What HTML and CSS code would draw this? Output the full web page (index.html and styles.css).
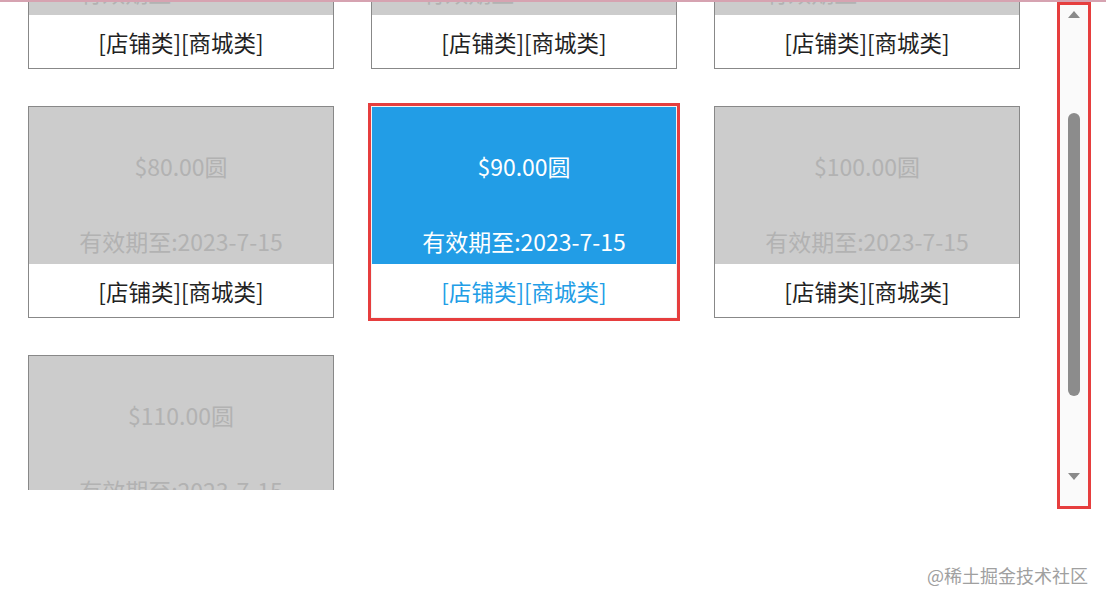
FILE: index.html
```html
<!DOCTYPE html>
<html lang="zh-CN">
<head>
    <meta charset="UTF-8">
    <meta name="viewport" content="width=device-width, initial-scale=1.0">
    <title>优惠券列表</title>
    <link rel="stylesheet" href="styles.css">
</head>
<body>
<div class="top-line"></div>

<div class="page">
    <!-- 优惠券列表 -->
    <div class="list">
        <div class="grid">
            <div class="coupon">
                <div class="coupon-main">
                    <div class="price">$50.00圆</div>
                    <div class="date">有效期至:2023-7-15</div>
                </div>
                <div class="coupon-type">[店铺类][商城类]</div>
            </div>
            <div class="coupon">
                <div class="coupon-main">
                    <div class="price">$60.00圆</div>
                    <div class="date">有效期至:2023-7-15</div>
                </div>
                <div class="coupon-type">[店铺类][商城类]</div>
            </div>
            <div class="coupon">
                <div class="coupon-main">
                    <div class="price">$70.00圆</div>
                    <div class="date">有效期至:2023-7-15</div>
                </div>
                <div class="coupon-type">[店铺类][商城类]</div>
            </div>
            <div class="coupon">
                <div class="coupon-main">
                    <div class="price">$80.00圆</div>
                    <div class="date">有效期至:2023-7-15</div>
                </div>
                <div class="coupon-type">[店铺类][商城类]</div>
            </div>
            <div class="coupon active">
                <div class="coupon-main">
                    <div class="price">$90.00圆</div>
                    <div class="date">有效期至:2023-7-15</div>
                </div>
                <div class="coupon-type">[店铺类][商城类]</div>
            </div>
            <div class="coupon">
                <div class="coupon-main">
                    <div class="price">$100.00圆</div>
                    <div class="date">有效期至:2023-7-15</div>
                </div>
                <div class="coupon-type">[店铺类][商城类]</div>
            </div>
            <div class="coupon">
                <div class="coupon-main">
                    <div class="price">$110.00圆</div>
                    <div class="date">有效期至:2023-7-15</div>
                </div>
                <div class="coupon-type">[店铺类][商城类]</div>
            </div>
        </div>
    </div>

    <!-- 滚动条 -->
    <div class="scrollbar">
        <div class="arrow-up"></div>
        <div class="thumb"></div>
        <div class="arrow-down"></div>
    </div>
</div>

<div class="watermark">@稀土掘金技术社区</div>
</body>
</html>
```

FILE: styles.css
```css
body {
    margin: 0;
    background-color: #fff;
    font-family: "Noto Sans CJK SC", "Noto Sans", sans-serif;
}

.top-line {
    height: 2px;
    background-color: #d6a3b1;
}

.page {
    display: flex;
    align-items: flex-start;
}

/* 优惠券列表 */
.list {
    width: 1057px;
    height: 488px;
    overflow: hidden;
}

.grid {
    display: grid;
    grid-template-columns: repeat(3, 306px);
    grid-auto-rows: 212px;
    column-gap: 37px;
    row-gap: 37px;
    margin-top: -145px;
    padding-left: 28px;
}

.coupon {
    display: flex;
    flex-direction: column;
    border: 1px solid #888;
    background: #fff;
}

.coupon-main {
    height: 157px;
    display: flex;
    flex-direction: column;
    justify-content: space-between;
    padding: 46px 0 10px;
    box-sizing: border-box;
    background-color: #cccccc;
    color: #b2b2b2;
    text-align: center;
    font-size: 23px;
    line-height: 26px;
}

.coupon-type {
    flex: 1;
    display: flex;
    align-items: center;
    justify-content: center;
    font-size: 22.5px;
    color: #222;
}

.coupon.active {
    border-color: #f4f4f4;
    outline: 3px solid #e63e3e;
}

.coupon.active .coupon-main {
    background-color: #229de6;
    color: #fff;
}

.coupon.active .coupon-type {
    color: #229de6;
}

/* 滚动条 */
.scrollbar {
    width: 28px;
    height: 501px;
    border: 3px solid #e63e3e;
    background-color: #fafafa;
    display: flex;
    flex-direction: column;
    align-items: center;
}

.arrow-up {
    margin-top: 6px;
    border-left: 6px solid transparent;
    border-right: 6px solid transparent;
    border-bottom: 7px solid #8a8a8a;
}

.thumb {
    width: 12px;
    height: 283px;
    margin-top: 95px;
    border-radius: 6px;
    background-color: #8c8c8c;
}

.arrow-down {
    margin-top: auto;
    margin-bottom: 26px;
    border-left: 6px solid transparent;
    border-right: 6px solid transparent;
    border-top: 7px solid #8a8a8a;
}

.watermark {
    margin-top: 53px;
    padding-right: 18px;
    text-align: right;
    font-size: 18px;
    color: #a0a0a0;
}
```
